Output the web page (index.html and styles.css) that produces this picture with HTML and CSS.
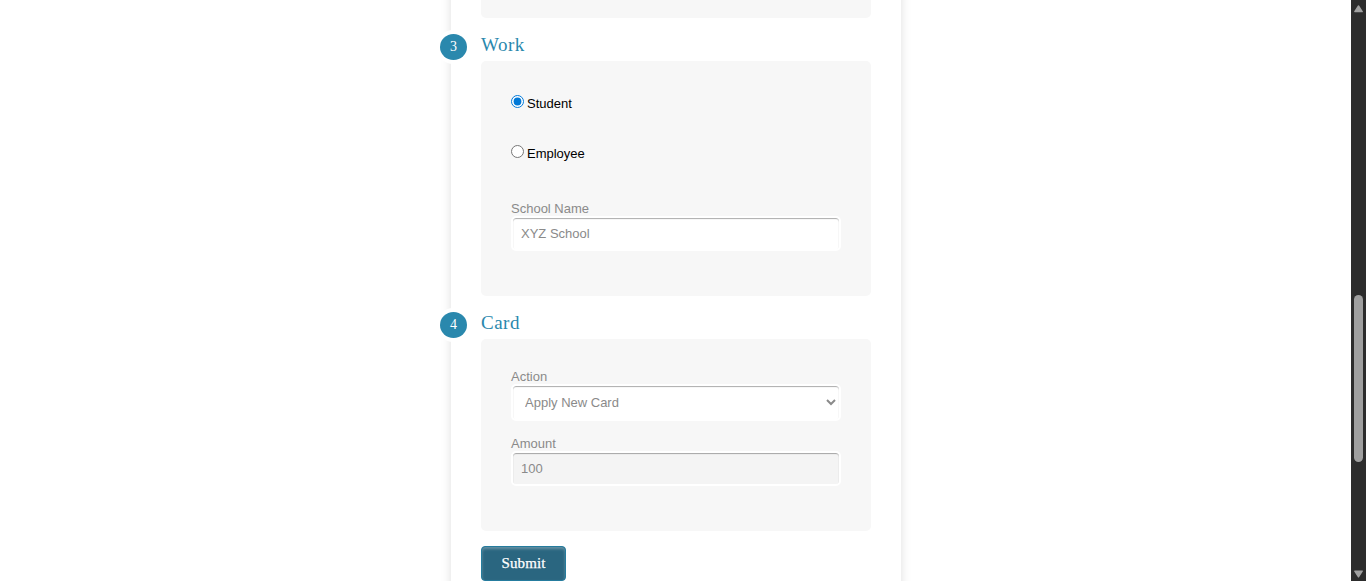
FILE: index.html
```
<!DOCTYPE html>
<html lang="en">
<head>
<meta charset="utf-8">
<title>Card Application</title>
<link rel="stylesheet" href="styles.css">
</head>
<body>
<main class="page">
  <form class="form">
    <div class="panel panel-tail"></div>
    <h2 class="heading"><span class="number">3</span><span class="title">Work</span></h2>
    <section class="panel panel-work">
      <label class="choice"><input class="radio" type="radio" name="work" checked><span>Student</span></label>
      <label class="choice"><input class="radio" type="radio" name="work"><span>Employee</span></label>
      <label class="label label-school" for="school">School Name</label>
      <input class="field" id="school" type="text" value="XYZ School">
    </section>
    <h2 class="heading"><span class="number">4</span><span class="title">Card</span></h2>
    <section class="panel panel-card">
      <label class="label" for="action">Action</label>
      <select class="field select" id="action"><option>Apply New Card</option></select>
      <label class="label label-amount" for="amount">Amount</label>
      <input class="field readonly" id="amount" type="text" value="100" readonly>
    </section>
    <button class="submit" type="button">Submit</button>
  </form>
</main>
<aside class="scrollbar">
  <svg class="arrow" width="9" height="8" viewBox="0 0 9 8"><path d="M4.5 1 L8.2 6.6 H.8Z" fill="#a0a0a0" stroke="#a0a0a0" stroke-width="1.4" stroke-linejoin="round"/></svg>
  <div class="thumb"></div>
  <svg class="arrow" width="9" height="8" viewBox="0 0 9 8"><path d="M4.5 6.8 L8.2 1.2 H.8Z" fill="#a0a0a0" stroke="#a0a0a0" stroke-width="1.4" stroke-linejoin="round"/></svg>
</aside>
</body>
</html>
```
FILE: styles.css
```
* { box-sizing: border-box; }
body {
  margin: 0;
  height: 581px;
  display: flex;
  overflow: hidden;
  background: #fff;
  font-family: "Liberation Sans", Arial, sans-serif;
}
.page { flex: 1; height: 581px; overflow: hidden; }
.form {
  width: 450px;
  height: 621px;
  margin: -20px auto 0;
  padding: 20px 30px 0;
  position: relative;
  left: 0.5px;
  background: #fff;
  box-shadow: 0 0 10px rgba(0, 0, 0, 0.13);
}
.panel {
  display: flex;
  flex-direction: column;
  padding: 0 30px;
  background: #f7f7f7;
  border-radius: 5px;
}
.panel-tail { height: 18px; border-radius: 0 0 5px 5px; }
.panel-work { height: 235px; padding-top: 30px; }
.panel-card { height: 192px; padding-top: 30px; }
.heading {
  display: flex;
  height: 43px;
  margin: 0;
  padding-top: 16px;
  font: 400 19px/22px "Liberation Serif", "Times New Roman", serif;
  color: #2a88ad;
}
.title { letter-spacing: 0.5px; }
.number {
  width: 27px;
  height: 26px;
  margin: 0 14px 0 -41px;
  border-radius: 50%;
  background: #2a88ad;
  box-shadow: 0 0 0 4px rgba(255, 255, 255, 0.9);
  color: #fff;
  font-size: 14px;
  line-height: 25px;
  text-align: center;
}
.choice {
  display: flex;
  height: 50px;
  align-items: flex-start;
  font-size: 13px;
  line-height: 26px;
  color: #000;
}
.radio { width: 13px; height: 13px; margin: 4px 3px 0 0; accent-color: #0078d7; }
.label { height: 15px; font-size: 13px; line-height: 16px; color: #8a8a8a; }
.label-school { margin-top: 10px; }
.label-amount { margin-top: 15px; }
.field {
  width: 330px;
  height: 35px;
  padding: 0 8px 1px;
  border: 2px solid #fff;
  border-radius: 5px;
  outline: none;
  background: #fff;
  box-shadow: inset 0 1px 1px rgba(0, 0, 0, 0.33);
  color: #8a8a8a;
  font: 13px "Liberation Sans", Arial, sans-serif;
}
.select { height: 37px; padding-bottom: 1px; }
.readonly { background: #f4f4f4; }
.submit {
  display: block;
  width: 85px;
  height: 35px;
  margin-top: 15px;
  padding: 0;
  border: 1px solid #257c9e;
  border-radius: 4px;
  background: #2a6680;
  box-shadow: inset 0 2px 3px rgba(255, 255, 255, 0.28);
  color: #fff;
  font: 400 15px "Liberation Serif", "Times New Roman", serif;
  letter-spacing: 0.1px;
  -webkit-text-stroke: 0.25px #fff;
}
.scrollbar {
  display: flex;
  flex-direction: column;
  align-items: center;
  justify-content: space-between;
  width: 15px;
  height: 581px;
  padding: 5px 0 3px;
  background: #2c2c2c;
}
.arrow { display: block; }
.thumb { width: 9px; height: 167px; margin-top: 173px; border-radius: 5px; background: #9f9f9f; }
```
